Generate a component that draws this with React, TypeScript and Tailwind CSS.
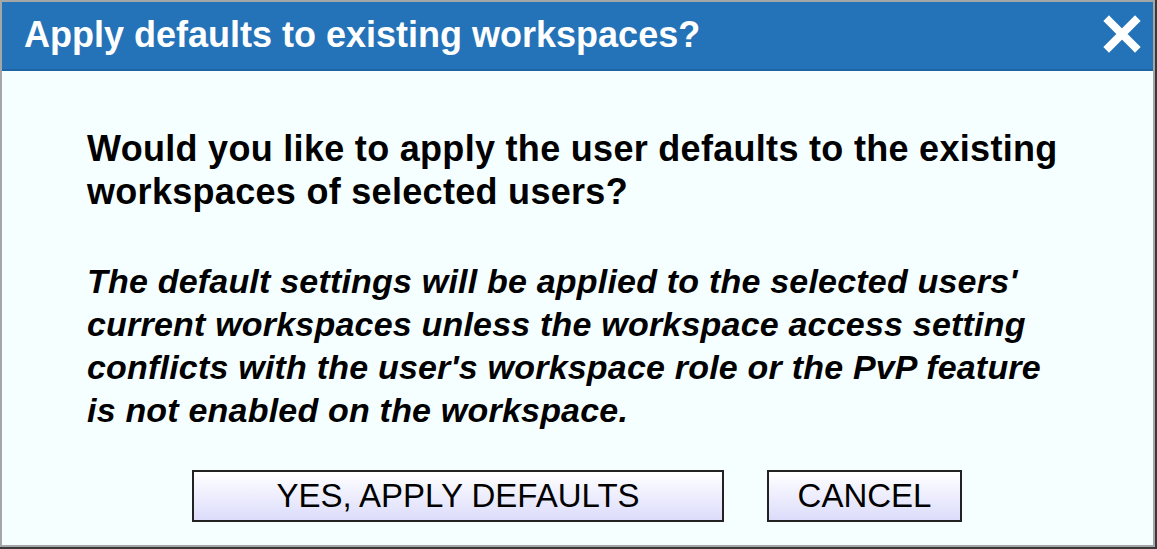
import React from 'react';

export default function App() {
  return (
    <div className="w-[1157px] h-[549px] bg-[#3a3a3a] pr-[2px] pb-[2px]" style={{ fontFamily: '"Liberation Sans", Arial, sans-serif' }}>
      <div className="h-full border-2 border-[#a3a7a8] bg-[#f5ffff] flex flex-col">
        {/* Title bar */}
        <div className="h-[69px] bg-[#2473b8] border-b-2 border-[#1e65a6] flex items-center justify-between pl-[22px] pr-[12px] shrink-0">
          <h1 className="text-white font-bold text-[36px] leading-none mt-[-2px]">Apply defaults to existing workspaces?</h1>
          <svg width="38" height="38" viewBox="0 0 38 38" className="mt-[-4px]">
            <path d="M6 6 L32 32 M32 6 L6 32" stroke="white" strokeWidth="8" strokeLinecap="square" />
          </svg>
        </div>

        {/* Body */}
        <div className="flex-1 flex flex-col pl-[85px] pt-[56px]">
          <p className="w-[1000px] text-black font-bold text-[36px] tracking-[0.3px] leading-[43px]">
            Would you like to apply the user defaults to the existing workspaces of selected users?
          </p>
          <p className="w-[985px] text-black font-bold italic text-[34px] tracking-[0.2px] leading-[43px] mt-[47px]">
            The default settings will be applied to the selected users' current workspaces unless the workspace access setting conflicts with the user's workspace role or the PvP feature is not enabled on the workspace.
          </p>
        </div>

        {/* Buttons */}
        <div className="flex gap-[43px] pl-[190px] pb-[23px] shrink-0">
          <button className="w-[532px] h-[52px] border-2 border-[#222] bg-gradient-to-b from-white to-[#dcdcfb] text-black text-[33px] flex items-center justify-center">
            YES, APPLY DEFAULTS
          </button>
          <button className="w-[195px] h-[52px] border-2 border-[#222] bg-gradient-to-b from-white to-[#dcdcfb] text-black text-[33px] flex items-center justify-center">
            CANCEL
          </button>
        </div>
      </div>
    </div>
  );
}
